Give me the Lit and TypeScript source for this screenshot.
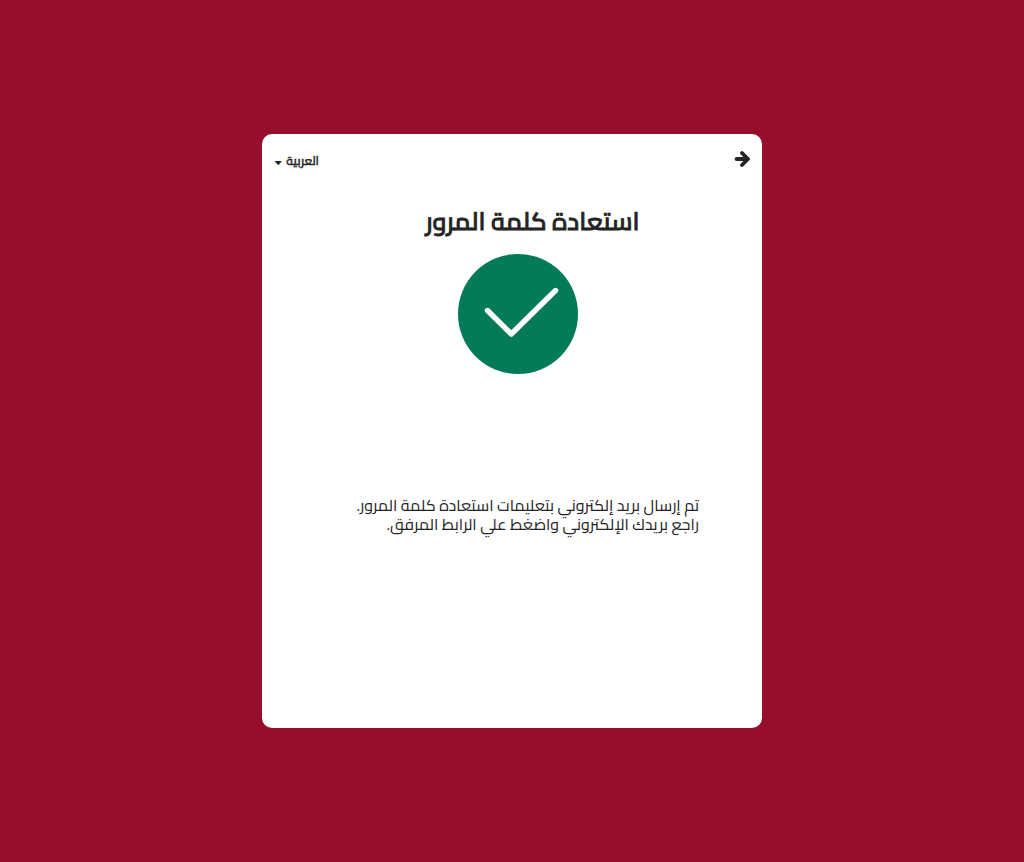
import { LitElement, html, css } from "lit";
import { customElement } from "lit/decorators.js";

@customElement("app-root")
export class AppRoot extends LitElement {
  static styles = css`
    :host {
      display: flex;
      align-items: center;
      justify-content: center;
      min-height: 100vh;
      box-sizing: border-box;
      padding: 16px;
      background: #960e2b;
      color: #242424;
      font-family: Cairo, "DejaVu Sans", sans-serif;
    }
    .card {
      box-sizing: border-box;
      width: 100%;
      max-width: 500px;
      padding: 16px 12px 194px;
      border-radius: 10px;
      background: #fff;
    }
    .bar {
      display: flex;
      align-items: flex-start;
      justify-content: space-between;
      height: 20px;
    }
    .back {
      display: flex;
      padding: 0;
      border: 0;
      background: none;
      color: inherit;
      cursor: pointer;
    }
    .lang {
      display: flex;
      align-items: center;
      gap: 4px;
    }
    .select {
      appearance: none;
      padding: 0;
      border: 0;
      background: none;
      color: inherit;
      font-family: inherit;
      font-size: 12px;
      font-weight: 600;
      line-height: 22px;
      -webkit-text-stroke: 0.03em currentColor;
    }
    .title {
      margin: 33px 0 15px;
      padding-left: 41px;
      font-size: 25px;
      font-weight: 600;
      line-height: 36px;
      text-align: center;
      -webkit-text-stroke: 0.03em currentColor;
    }
    .mark {
      display: flex;
      justify-content: center;
      padding-left: 12px;
    }
    .message {
      margin: 122px 0 0;
      padding: 0 51px;
      font-size: 16px;
      line-height: 19px;
      white-space: pre-line;
    }
  `;

  render() {
    return html`
      <main class="card" dir="rtl" lang="ar">
        <header class="bar">
          <button class="back" type="button" aria-label="رجوع">
            <svg width="16" height="18" viewBox="0 0 16 18" fill="none" stroke="currentColor" stroke-width="4" stroke-linecap="round" stroke-linejoin="round" aria-hidden="true">
              <path d="M2.6 9H13" />
              <path d="M8 3L14 9L8 15" stroke-width="3.8" />
            </svg>
          </button>
          <label class="lang">
            <select class="select" aria-label="اللغة">
              <option selected>العربية</option>
            </select>
            <svg width="8" height="10" viewBox="0 0 8 10" aria-hidden="true">
              <path d="M0.5 5H8L4.25 9.2Z" fill="currentColor" />
            </svg>
          </label>
        </header>
        <h1 class="title">استعادة كلمة المرور</h1>
        <div class="mark">
          <svg width="120" height="120" viewBox="0 0 120 120" aria-hidden="true">
            <circle cx="60" cy="60" r="60" fill="#037b59" />
            <path d="M29.5 56.5L53.3 80L97.5 36.5" fill="none" stroke="#fff" stroke-width="5.4" stroke-linecap="round" stroke-linejoin="round" />
          </svg>
        </div>
        <p class="message">تم إرسال بريد إلكتروني بتعليمات استعادة كلمة المرور.
راجع بريدك الإلكتروني واضغط علي الرابط المرفق.</p>
      </main>
    `;
  }
}
